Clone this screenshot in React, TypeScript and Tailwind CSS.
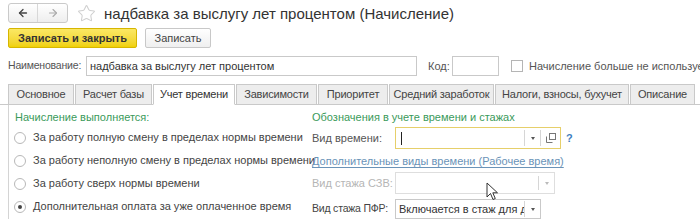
import { ArrowLeft, ArrowRight, Star } from "lucide-react";

const TABS = [
  { label: "Основное", w: "w-[66px]" },
  { label: "Расчет базы", w: "w-[77px]" },
  { label: "Учет времени", w: "w-[82px]", active: true },
  { label: "Зависимости", w: "w-[81px]" },
  { label: "Приоритет", w: "w-[70px]" },
  { label: "Средний заработок", w: "w-[105px]" },
  { label: "Налоги, взносы, бухучет", w: "w-[134px]" },
  { label: "Описание", w: "w-[65px]" },
];

const RADIOS = [
  "За работу полную смену в пределах нормы времени",
  "За работу неполную смену в пределах нормы времени",
  "За работу сверх нормы времени",
  "Дополнительная оплата за уже оплаченное время",
];

function Dropdown({ light }: { light?: boolean }) {
  return (
    <div className="flex h-full w-[16px] items-center justify-center border-l border-[#d6d6d6]">
      <span className={`block h-0 w-0 border-x-[2px] border-t-[3px] border-x-transparent ${light ? "border-t-[#bbb]" : "border-t-[#555]"}`} />
    </div>
  );
}

export default function App() {
  return (
    <div className="h-[222px] w-[700px] overflow-hidden bg-white text-[11px] text-[#4a4a4a] [font-family:'Liberation_Sans',Arial,sans-serif]">
      {/* title row */}
      <div className="flex h-[25px] items-center pl-[8px] pt-[1px]">
        <div className="flex h-[20px] w-[60px] shrink-0 rounded-[3px] border border-[#cacaca] bg-gradient-to-b from-white to-[#eeeeee]">
          <div className="flex w-[30px] items-center justify-center border-r border-[#d8d8d8]">
            <ArrowLeft className="h-[12px] w-[12px] text-[#444]" strokeWidth={2.6} />
          </div>
          <div className="flex w-[30px] items-center justify-center">
            <ArrowRight className="h-[12px] w-[12px] text-[#aaa]" strokeWidth={2.2} />
          </div>
        </div>
        <Star className="ml-[9px] h-[19px] w-[19px] shrink-0 text-[#cfcfcf]" strokeWidth={1.3} />
        <span className="ml-[8px] whitespace-nowrap text-[15px] leading-none text-[#333]">надбавка за выслугу лет процентом (Начисление)</span>
      </div>

      {/* buttons */}
      <div className="mt-[3px] flex h-[20px] items-center gap-[8px] pl-[8px]">
        <button className="flex h-[20px] w-[129px] items-center justify-center rounded-[2px] border border-[#d6b600] bg-gradient-to-b from-[#fbe863] to-[#f0d100] text-[11px] font-bold text-[#333]">
          Записать и закрыть
        </button>
        <button className="flex h-[20px] w-[66px] items-center justify-center rounded-[2px] border border-[#c8c8c8] bg-gradient-to-b from-white to-[#efefef] text-[11px] text-[#444]">
          Записать
        </button>
      </div>

      {/* name row */}
      <div className="mt-[8px] flex h-[20px] items-center whitespace-nowrap pl-[8px]">
        <span className="w-[78px] shrink-0 text-[10.5px] tracking-[-0.2px] text-[#555]">Наименование:</span>
        <div className="flex h-[20px] w-[331px] shrink-0 items-center border border-[#c9c9c9] px-[3px] text-[#333]">надбавка за выслугу лет процентом</div>
        <span className="ml-[11px] w-[24px] shrink-0 text-[#555]">Код:</span>
        <div className="h-[20px] w-[47px] shrink-0 border border-[#c9c9c9]" />
        <div className="ml-[12px] h-[12px] w-[12px] shrink-0 border border-[#b5b5b5]" />
        <span className="ml-[6px] text-[#555]">Начисление больше не используется</span>
      </div>

      {/* tabs */}
      <div className="mt-[8px] flex h-[21px] items-end border-b border-[#c9c9c9] pl-[8px]">
        {TABS.map((t) => (
          <div
            key={t.label}
            className={`${t.w} -mb-px mr-[1px] flex h-[21px] shrink-0 items-center justify-center whitespace-nowrap border border-[#c9c9c9] text-[11px] tracking-[-0.2px] ${
              t.active ? "border-b-white bg-white text-[#333]" : "bg-[#ededed] text-[#444]"
            }`}
          >
            {t.label}
          </div>
        ))}
      </div>

      {/* content */}
      <div className="ml-[8px] flex border-l border-[#d4d4d4]">
        <div className="w-[303px] shrink-0 pl-[6px] pt-[5px]">
          <div className="leading-[14px] text-[#3a9a5a]">Начисление выполняется:</div>
          <div className="mt-[2px] flex flex-col">
            {RADIOS.map((r, i) => (
              <div key={r} className="flex h-[23px] items-center">
                <span className="ml-[-1px] flex h-[12px] w-[12px] shrink-0 items-center justify-center rounded-full border border-[#b8b8b8] bg-white">
                  {i === 3 && <span className="h-[4px] w-[4px] rounded-full bg-[#444]" />}
                </span>
                <span className="ml-[7px] whitespace-nowrap text-[11px] text-[#444]">{r}</span>
              </div>
            ))}
          </div>
        </div>

        <div className="flex-1 whitespace-nowrap pt-[5px]">
          <div className="leading-[14px] text-[#3a9a5a]">Обозначения в учете времени и стажах</div>
          <div className="mt-[3px] flex h-[22px] items-center">
            <span className="w-[83px] shrink-0 text-[#555]">Вид времени:</span>
            <div className="flex h-[22px] w-[166px] shrink-0 items-center border border-[#e6cf6a] bg-white">
              <div className="flex flex-1 items-center pl-[5px]">
                <span className="h-[13px] w-px bg-[#222]" />
              </div>
              <div className="flex h-[16px] w-[16px] items-center justify-center border-l border-[#d6d6d6]">
                <span className="block h-0 w-0 border-x-[2px] border-t-[3px] border-x-transparent border-t-[#555]" />
              </div>
              <div className="flex h-[16px] w-[20px] items-center justify-center border-l border-[#d6d6d6]">
                <svg width="10" height="10" viewBox="0 0 10 10" fill="none" stroke="#777" strokeWidth="1">
                  <rect x="3.5" y="0.5" width="6" height="6" />
                  <path d="M0.5 3.5v6h6" />
                </svg>
              </div>
            </div>
            <span className="ml-[5px] font-bold text-[#3f7fbf]">?</span>
          </div>
          <div className="mt-[5px] leading-[14px] text-[#6a93b8] underline underline-offset-2">Дополнительные виды времени (Рабочее время)</div>
          <div className="mt-[4px] flex h-[22px] items-center">
            <span className="w-[83px] shrink-0 text-[#b5b5b5]">Вид стажа СЗВ:</span>
            <div className="relative flex h-[22px] w-[160px] shrink-0 items-center justify-end border border-[#dedede]">
              <div className="h-[14px]">
                <Dropdown light />
              </div>
              <svg className="absolute left-[90px] top-[9px]" width="13" height="19" viewBox="0 0 13 19">
                <path d="M1 1 L1 15 L4.5 11.5 L7 17.5 L9.3 16.5 L6.8 10.8 L11.5 10.8 Z" fill="white" stroke="#333" strokeWidth="1" strokeLinejoin="round" />
              </svg>
            </div>
          </div>
          <div className="mt-[5px] flex h-[20px] items-center">
            <span className="w-[83px] shrink-0 text-[10.5px] tracking-[-0.2px] text-[#444]">Вид стажа ПФР:</span>
            <div className="flex h-[20px] w-[146px] shrink-0 items-center border border-[#c9c9c9]">
              <span className="flex-1 overflow-hidden whitespace-nowrap pl-[3px] text-[#333]">Включается в стаж для д</span>
              <div className="h-[16px]">
                <Dropdown />
              </div>
            </div>
          </div>
        </div>
      </div>
    </div>
  );
}
